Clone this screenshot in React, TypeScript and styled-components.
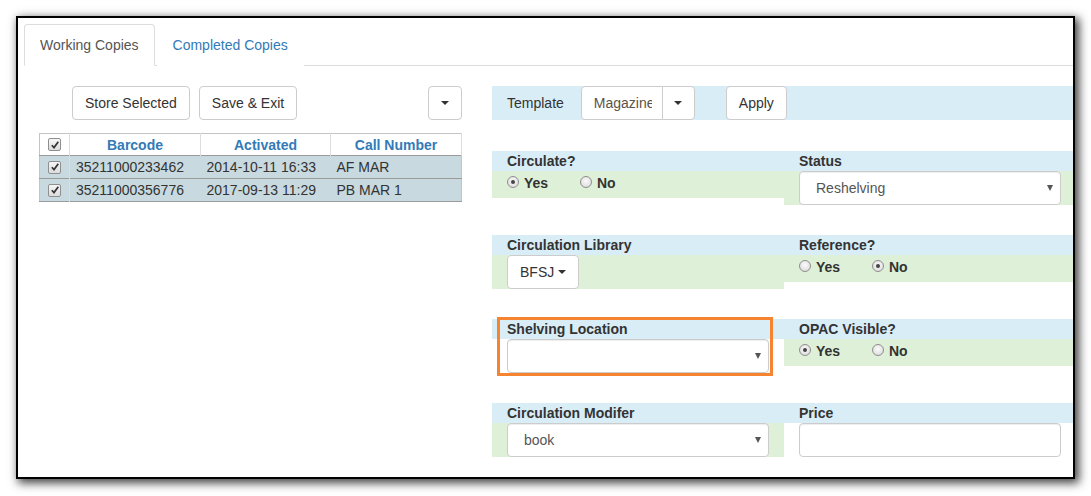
import styled, { createGlobalStyle } from "styled-components";

const GlobalStyle = createGlobalStyle`
  html, body {
    margin: 0;
    padding: 0;
    background: #ffffff;
  }
  body {
    font-family: "Liberation Sans", Arial, sans-serif;
    font-size: 14px;
    line-height: 20px;
    color: #333333;
  }
  * {
    box-sizing: border-box;
  }
`;

const LINK = "#337ab7";
const INFO = "#d9edf7";
const SUCCESS = "#dff0d8";

type Copy = { barcode: string; activated: string; callNumber: string };

const copies: Copy[] = [
  { barcode: "35211000233462", activated: "2014-10-11 16:33", callNumber: "AF MAR" },
  { barcode: "35211000356776", activated: "2017-09-13 11:29", callNumber: "PB MAR 1" },
];

const CheckMark = () => (
  <CheckBox>
    <svg width="10" height="10" viewBox="0 0 10 10">
      <path d="M1.8 5.2 L4 7.6 L8.3 1.8" fill="none" stroke="#333" strokeWidth="1.7" />
    </svg>
  </CheckBox>
);

const RadioSet = ({ value }: { value: "yes" | "no" }) => (
  <RadioGroup>
    <RadioOption>
      <RadioDot checked={value === "yes"} />
      Yes
    </RadioOption>
    <RadioOption>
      <RadioDot checked={value === "no"} />
      No
    </RadioOption>
  </RadioGroup>
);

const FakeSelect = ({ value }: { value?: string }) => (
  <SelectBox>
    <span>{value}</span>
    <SelectArrow />
  </SelectBox>
);

export default function App() {
  return (
    <Page>
      <GlobalStyle />
      <Frame>
        <Tabs>
          <Tab active>Working Copies</Tab>
          <Tab>Completed Copies</Tab>
        </Tabs>
        <Body>
          <LeftPanel>
            <ButtonRow>
              <Button>Store Selected</Button>
              <Button>Save &amp; Exit</Button>
              <CaretButton>
                <Caret />
              </CaretButton>
            </ButtonRow>
            <CopyTable>
              <colgroup>
                <col style={{ width: 30 }} />
                <col style={{ width: 131 }} />
                <col style={{ width: 130 }} />
                <col style={{ width: 131 }} />
              </colgroup>
              <thead>
                <tr>
                  <CheckCell as="th">
                    <CheckMark />
                  </CheckCell>
                  <HeadCell>Barcode</HeadCell>
                  <HeadCell>Activated</HeadCell>
                  <HeadCell>Call Number</HeadCell>
                </tr>
              </thead>
              <tbody>
                {copies.map((copy) => (
                  <CopyRow key={copy.barcode}>
                    <CheckCell>
                      <CheckMark />
                    </CheckCell>
                    <Cell>{copy.barcode}</Cell>
                    <Cell>{copy.activated}</Cell>
                    <Cell>{copy.callNumber}</Cell>
                  </CopyRow>
                ))}
              </tbody>
            </CopyTable>
          </LeftPanel>

          <RightPanel>
            <TemplateBar>
              <span>Template</span>
              <ButtonGroup>
                <TemplateButton>
                  <ClipText>Magazine</ClipText>
                </TemplateButton>
                <GroupCaret>
                  <Caret />
                </GroupCaret>
              </ButtonGroup>
              <ApplyButton>Apply</ApplyButton>
            </TemplateBar>

            <FieldRow>
              <FieldCol>
                <FieldLabel>Circulate?</FieldLabel>
                <FieldBody tone="green">
                  <RadioSet value="yes" />
                </FieldBody>
              </FieldCol>
              <FieldCol>
                <FieldLabel>Status</FieldLabel>
                <FieldBody tone="green">
                  <FakeSelect value="Reshelving" />
                </FieldBody>
              </FieldCol>
            </FieldRow>

            <FieldRow>
              <FieldCol>
                <FieldLabel>Circulation Library</FieldLabel>
                <FieldBody tone="green">
                  <LibraryButton>
                    BFSJ <Caret />
                  </LibraryButton>
                </FieldBody>
              </FieldCol>
              <FieldCol>
                <FieldLabel>Reference?</FieldLabel>
                <FieldBody tone="green">
                  <RadioSet value="no" />
                </FieldBody>
              </FieldCol>
            </FieldRow>

            <FieldRow>
              <FieldCol>
                <FieldLabel>Shelving Location</FieldLabel>
                <FieldBody tone="white">
                  <FakeSelect />
                </FieldBody>
                <Highlight />
              </FieldCol>
              <FieldCol>
                <FieldLabel>OPAC Visible?</FieldLabel>
                <FieldBody tone="green">
                  <RadioSet value="yes" />
                </FieldBody>
              </FieldCol>
            </FieldRow>

            <FieldRow>
              <FieldCol>
                <FieldLabel>Circulation Modifer</FieldLabel>
                <FieldBody tone="green">
                  <FakeSelect value="book" />
                </FieldBody>
              </FieldCol>
              <FieldCol>
                <FieldLabel>Price</FieldLabel>
                <FieldBody tone="white">
                  <TextInput />
                </FieldBody>
              </FieldCol>
            </FieldRow>
          </RightPanel>
        </Body>
      </Frame>
    </Page>
  );
}

const Page = styled.div`
  padding: 16px;
`;

const Frame = styled.div`
  width: 1059px;
  height: 463px;
  border: 2px solid #000000;
  background: #ffffff;
  box-shadow: 3px 3px 9px 1px rgba(0, 0, 0, 0.75);
  overflow: hidden;
  padding: 6px 0 0 6px;
`;

const Tabs = styled.div`
  display: flex;
  border-bottom: 1px solid #dddddd;
`;

const Tab = styled.div<{ active?: boolean }>`
  padding: 10px 15px;
  margin-right: 2px;
  margin-bottom: -1px;
  border: 1px solid ${({ active }) => (active ? "#dddddd" : "transparent")};
  border-bottom-color: ${({ active }) => (active ? "#ffffff" : "transparent")};
  border-radius: 4px 4px 0 0;
  background: #ffffff;
  color: ${({ active }) => (active ? "#555555" : LINK)};
  white-space: nowrap;
`;

const Body = styled.div`
  display: flex;
  align-items: flex-start;
  margin-top: 20px;
`;

const LeftPanel = styled.div`
  width: 453px;
  flex-shrink: 0;
  padding: 0 15px;
`;

const ButtonRow = styled.div`
  display: flex;
  gap: 9px;
  padding-left: 33px;
`;

const Button = styled.div`
  height: 34px;
  padding: 6px 12px;
  border: 1px solid #cccccc;
  border-radius: 4px;
  background: #ffffff;
  color: #333333;
  white-space: nowrap;
`;

const CaretButton = styled(Button)`
  margin-left: auto;
  width: 34px;
  display: flex;
  align-items: center;
  justify-content: center;
  padding: 0;
`;

const Caret = styled.span`
  display: inline-block;
  width: 0;
  height: 0;
  border-top: 4px solid #333333;
  border-left: 4px solid transparent;
  border-right: 4px solid transparent;
  vertical-align: middle;
`;

const CopyTable = styled.table`
  margin-top: 13px;
  width: 423px;
  table-layout: fixed;
  border-collapse: collapse;
  border: 1px solid #c4c4c4;
`;

const HeadCell = styled.th`
  height: 22px;
  padding: 0 6px;
  border-right: 1px solid #dddddd;
  background: #ffffff;
  color: ${LINK};
  font-weight: bold;
  text-align: center;
`;

const CopyRow = styled.tr`
  background: #c8dadf;
  border-top: 1px solid #9a9a9a;
  border-bottom: 1px solid #9a9a9a;
`;

const Cell = styled.td`
  height: 23px;
  padding: 0 6px;
  white-space: nowrap;
  overflow: hidden;
`;

const CheckCell = styled.td`
  padding: 0;
  text-align: center;
  border-right: 1px solid #dddddd;
  vertical-align: middle;
  line-height: 0;
`;

const CheckBox = styled.span`
  display: inline-flex;
  align-items: center;
  justify-content: center;
  width: 13px;
  height: 13px;
  border: 1px solid #8e8f8f;
  border-radius: 2px;
  background: linear-gradient(#f6f6f6, #dcdcdc);
`;

const RightPanel = styled.div`
  width: 600px;
  flex-shrink: 0;
  padding-left: 15px;
`;

const TemplateBar = styled.div`
  display: flex;
  align-items: center;
  height: 34px;
  padding-left: 15px;
  background: ${INFO};
`;

const ButtonGroup = styled.div`
  display: flex;
  margin-left: 17px;
`;

const TemplateButton = styled(Button)`
  width: 82px;
  padding: 6px 0 6px 12px;
  border-radius: 4px 0 0 4px;
  color: #5c5247;
`;

const ClipText = styled.span`
  display: block;
  width: 58px;
  overflow: hidden;
`;

const GroupCaret = styled(Button)`
  width: 33px;
  margin-left: -1px;
  padding: 0;
  display: flex;
  align-items: center;
  justify-content: center;
  border-radius: 0 4px 4px 0;
`;

const ApplyButton = styled(Button)`
  margin-left: 31px;
`;

const FieldRow = styled.div`
  display: flex;
  align-items: flex-start;
  margin-top: 30px;

  ${TemplateBar} + & {
    margin-top: 31px;
  }
`;

const FieldCol = styled.div`
  position: relative;
  width: 292px;
  flex-shrink: 0;
`;

const FieldLabel = styled.div`
  height: 20px;
  padding: 0 15px;
  background: ${INFO};
  font-weight: bold;
  white-space: nowrap;
`;

const FieldBody = styled.div<{ tone: "green" | "white" }>`
  padding: 0 15px;
  background: ${({ tone }) => (tone === "green" ? SUCCESS : "#ffffff")};
`;

const RadioGroup = styled.div`
  display: flex;
  padding: 2px 0 5px;
`;

const RadioOption = styled.label`
  display: flex;
  align-items: center;
  gap: 5px;
  width: 73px;
  font-weight: bold;
`;

const RadioDot = styled.span<{ checked: boolean }>`
  position: relative;
  width: 12px;
  height: 12px;
  margin-top: -3px;
  border: 1px solid #8f8f8f;
  border-radius: 50%;
  background: radial-gradient(circle at 50% 40%, #fbfbfb, #d6d6d6);

  &::after {
    content: "";
    display: ${({ checked }) => (checked ? "block" : "none")};
    position: absolute;
    left: 3px;
    top: 3px;
    width: 4px;
    height: 4px;
    border-radius: 50%;
    background: #444444;
  }
`;

const SelectBox = styled.div`
  display: flex;
  align-items: center;
  justify-content: space-between;
  height: 34px;
  padding: 0 7px 0 16px;
  border: 1px solid #cccccc;
  border-radius: 4px;
  background: #ffffff;
  box-shadow: inset 0 1px 1px rgba(0, 0, 0, 0.075);
  color: #555555;
`;

const SelectArrow = styled.span`
  width: 0;
  height: 0;
  border-top: 6px solid #555555;
  border-left: 3px solid transparent;
  border-right: 3px solid transparent;
`;

const LibraryButton = styled(Button)`
  display: inline-flex;
  align-items: center;
  gap: 4px;
  width: 72px;
  color: #333333;
`;

const TextInput = styled.div`
  height: 34px;
  border: 1px solid #cccccc;
  border-radius: 4px;
  background: #ffffff;
  box-shadow: inset 0 1px 1px rgba(0, 0, 0, 0.075);
`;

const Highlight = styled.div`
  position: absolute;
  left: 5px;
  top: -2px;
  width: 276px;
  height: 59px;
  border: 3px solid #f5832f;
  pointer-events: none;
`;
